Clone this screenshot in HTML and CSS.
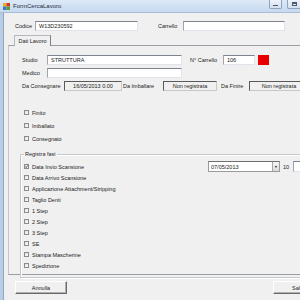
FILE: index.html
```html
<!DOCTYPE html>
<html lang="it">
<head>
  <meta charset="UTF-8">
  <title>FormCercaLavoro</title>
  <link rel="stylesheet" href="styles.css">
</head>
<body>
  <div class="window">
    <div class="titlebar">
      <svg class="app-icon" width="7" height="7" viewBox="0 0 7 7">
        <rect x="0" y="0" width="3.5" height="3.5" fill="#e8b020"/>
        <rect x="3.5" y="0" width="3.5" height="3.5" fill="#d03a20"/>
        <rect x="0" y="3.5" width="3.5" height="3.5" fill="#3a78c8"/>
        <rect x="3.5" y="3.5" width="3.5" height="3.5" fill="#5aa040"/>
      </svg>
      <span class="title">FormCercaLavoro</span>
      <div class="caption-btns">
        <span class="cap-btn"><span class="glyph-min"></span></span>
        <span class="cap-btn cap-max"><span class="glyph-max"></span></span>
      </div>
    </div>

    <div class="client">
      <div class="row top-row">
        <span class="lbl w-codice-lbl">Codice</span>
        <div class="field w-codice">W13D230592</div>
        <span class="lbl w-carrello-lbl">Carrello</span>
        <div class="field w-carrello"></div>
      </div>

      <div class="tabs">
        <div class="tab">Dati Lavoro</div>
      </div>

      <div class="tab-page">
        <div class="row">
          <span class="lbl w-studio-lbl">Studio</span>
          <div class="field w-studio">STRUTTURA</div>
          <span class="lbl w-ncar-lbl">N° Carrello</span>
          <div class="field w-ncar">106</div>
          <span class="swatch"></span>
        </div>
        <div class="row row-gap">
          <span class="lbl w-studio-lbl">Medico</span>
          <div class="field w-studio"></div>
        </div>
        <div class="row row-gap">
          <span class="lbl w-cons-lbl">Da Consegnare</span>
          <div class="box w-cons">16/05/2013 0.00</div>
          <span class="lbl w-imb-lbl">Da Imballare</span>
          <div class="box w-imb">Non registrata</div>
          <span class="lbl w-fin-lbl">Da Finire</span>
          <div class="box w-fin">Non registrata</div>
        </div>

        <div class="checks">
          <div class="check-row"><span class="cb"></span><span>Finito</span></div>
          <div class="check-row"><span class="cb"></span><span>Imballato</span></div>
          <div class="check-row"><span class="cb"></span><span>Consegnato</span></div>
        </div>

        <fieldset class="group">
          <legend>Registra fasi</legend>
          <div class="phase">
            <span class="cb checked">
              <svg width="3" height="3" viewBox="0 0 3 3"><path d="M0.2 1.5 L1.2 2.6 L2.8 0.3" fill="none" stroke="#333" stroke-width="0.8"/></svg>
            </span>
            <span class="phase-first">Data Invio Scansione</span>
            <div class="picker">
              <span>07/05/2013</span>
              <span class="drop"><span class="arrow"></span></span>
            </div>
            <span class="hour">10</span>
            <div class="field w-min"></div>
          </div>
          <div class="phase"><span class="cb"></span><span>Data Arrivo Scansione</span></div>
          <div class="phase"><span class="cb"></span><span>Applicazione Attachment/Stripping</span></div>
          <div class="phase"><span class="cb"></span><span>Taglio Denti</span></div>
          <div class="phase"><span class="cb"></span><span>1 Step</span></div>
          <div class="phase"><span class="cb"></span><span>2 Step</span></div>
          <div class="phase"><span class="cb"></span><span>3 Step</span></div>
          <div class="phase"><span class="cb"></span><span>SE</span></div>
          <div class="phase"><span class="cb"></span><span>Stampa Mascherine</span></div>
          <div class="phase"><span class="cb"></span><span>Spedizione</span></div>
        </fieldset>
      </div>

      <div class="buttons">
        <button class="btn">Annulla</button>
        <button class="btn btn-save">Salva</button>
      </div>
    </div>
  </div>
</body>
</html>
```

FILE: styles.css
```css
body {
  margin: 0;
  background: #f0f0f0;
  font-family: "Liberation Sans", Arial, sans-serif;
  font-size: 5.5px;
  color: #222;
}
.window {
  width: 300px;
  height: 300px;
  overflow: hidden;
  display: flex;
  flex-direction: column;
  background: #f0f0f0;
}
.titlebar {
  height: 13px;
  flex: none;
  display: flex;
  align-items: center;
  background: linear-gradient(#dde9f6, #c6d9ef);
  border-bottom: 1px solid #a9bdd6;
  box-sizing: border-box;
}
.app-icon {
  margin-left: 3px;
  flex: none;
}
.title {
  margin-left: 3px;
  font-size: 6px;
  color: #1e2a3a;
}
.caption-btns {
  margin-left: auto;
  display: flex;
  align-self: flex-start;
}
.cap-btn {
  width: 13px;
  height: 9px;
  margin-left: 2px;
  border: 1px solid #8ea3bd;
  border-top: none;
  border-radius: 0 0 2px 2px;
  background: linear-gradient(#eef3fa, #d2dfee);
  box-sizing: border-box;
  display: flex;
  align-items: center;
  justify-content: center;
}
.cap-max {
  width: 15px;
  margin-left: 5px;
  margin-right: -2px;
}
.glyph-min {
  width: 5px;
  height: 1px;
  background: #4b5a6e;
  margin-top: 3px;
}
.glyph-max {
  width: 5px;
  height: 4px;
  border: 1px solid #4b5a6e;
  border-top-width: 2px;
  box-sizing: border-box;
}

.client {
  flex: 1;
  border-left: 3px solid #b8cce4;
  box-shadow: inset 1px 0 0 #8fa6c2;
  padding-left: 1px;
}
.row {
  display: flex;
  align-items: center;
  height: 10px;
}
.row-gap {
  margin-top: 3px;
}
.top-row {
  margin: 8px 0 0 11px;
}
.lbl {
  flex: none;
  white-space: nowrap;
}
.field, .box {
  height: 10px;
  box-sizing: border-box;
  background: #fff;
  border: 1px solid #e2e3ea;
  border-top-color: #7e8390;
  border-left-color: #a0a4ad;
  padding-left: 3px;
  line-height: 8px;
  white-space: nowrap;
  overflow: hidden;
  flex: none;
}
.box {
  background: #f0f0f0;
  border-color: #5a5a5a #c8c8c8 #c8c8c8 #5a5a5a;
  text-align: center;
  padding-left: 0;
}
.w-codice-lbl { width: 20px; }
.w-codice { width: 103px; }
.w-carrello-lbl { width: 25px; margin-left: 20px; }
.w-carrello { width: 102px; }

.tabs {
  margin: 4px 0 0 10px;
  height: 10px;
  display: flex;
}
.tab {
  width: 37px;
  height: 11px;
  box-sizing: border-box;
  border: 1px solid #b4b7bd;
  border-right-color: #7d818a;
  border-bottom: none;
  background: #f0f0f0;
  text-align: center;
  line-height: 10px;
  position: relative;
  z-index: 1;
}
.tab-page {
  margin-left: 4px;
  height: 230px;
  box-sizing: border-box;
  border: 1px solid #9a9da4;
  border-right: none;
  border-left-color: #c4c6ca;
  padding: 9px 0 0 13px;
}
.w-studio-lbl { width: 25px; }
.w-studio { width: 135px; }
.w-ncar-lbl { width: 33px; margin-left: 8px; }
.w-ncar { width: 32px; }
.swatch {
  width: 11px;
  height: 10px;
  margin-left: 3px;
  background: #e80000;
  flex: none;
}
.w-cons-lbl { width: 42px; }
.w-cons { width: 58px; }
.w-imb-lbl { width: 40px; margin-left: 1px; }
.w-imb { width: 54px; }
.w-fin-lbl { width: 28px; margin-left: 4px; }
.w-fin { width: 60px; }

.checks {
  margin-top: 15px;
  padding-left: 2px;
}
.check-row, .phase {
  display: flex;
  align-items: center;
  height: 13px;
  white-space: nowrap;
}
.cb {
  width: 5px;
  height: 5px;
  box-sizing: border-box;
  border: 1px solid #8c8c8c;
  background: linear-gradient(135deg, #dcdcdc, #fff);
  margin-right: 3px;
  flex: none;
  display: flex;
  align-items: center;
  justify-content: center;
}
.cb.checked {
  overflow: visible;
}
.cb svg {
  flex: none;
}

.group {
  margin: 6px -40px 0 -2px;
  padding: 4px 0 0 3px;
  border: 1px solid #c6c9cc;
  box-shadow: 1px 1px 0 #fff, inset 1px 1px 0 #fff;
  height: 127px;
  box-sizing: border-box;
}
.group legend {
  padding: 0 1px;
  line-height: 6px;
  font-size: 5.5px;
}
.phase {
  height: 11px;
}
.phase-first {
  width: 176px;
  flex: none;
}
.picker {
  width: 72px;
  height: 11px;
  box-sizing: border-box;
  background: #fff;
  border: 1px solid #9a9a9a;
  border-top-color: #6e6e6e;
  display: flex;
  align-items: center;
  padding-left: 2px;
  flex: none;
}
.drop {
  margin-left: auto;
  width: 7px;
  height: 9px;
  box-sizing: border-box;
  border-left: 1px solid #a8a8a8;
  background: linear-gradient(#f6f6f6, #dadada);
  display: flex;
  align-items: center;
  justify-content: center;
}
.arrow {
  width: 0;
  height: 0;
  border-left: 1.5px solid transparent;
  border-right: 1.5px solid transparent;
  border-top: 2px solid #222;
}
.hour {
  margin-left: 3px;
  width: 7px;
  flex: none;
}
.w-min {
  margin-left: 3px;
  width: 20px;
  height: 11px;
}

.buttons {
  margin: 6px 0 0 11px;
  display: flex;
}
.btn {
  width: 52px;
  height: 13px;
  box-sizing: border-box;
  padding: 0;
  font-family: inherit;
  font-size: 5.5px;
  color: #222;
  background: #f0f0f0;
  border: 1px solid;
  border-color: #fff #6a6a6a #6a6a6a #fff;
  box-shadow: inset -1px -1px 0 #b0b0b0;
  flex: none;
}
.btn-save {
  margin-left: 206px;
}
```
